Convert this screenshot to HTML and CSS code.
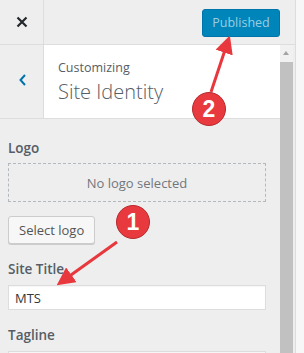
FILE: index.html
```html
<!DOCTYPE html>
<html>
<head>
  <title>Site Identity</title>
  <link rel="stylesheet" href="styles.css">
</head>
<body>

<div class="sidebar">
  <div class="topbar">
    <button class="close-btn" title="Close">
      <svg width="12" height="12" viewBox="0 0 12 12"><path d="M1.5 1.5 L10.5 10.5 M10.5 1.5 L1.5 10.5" stroke="#23282d" stroke-width="2.2"/></svg>
    </button>
    <div class="spacer"></div>
    <button class="publish-btn" disabled>Published</button>
  </div>

  <div class="panel">
    <div class="content">
      <div class="section-head">
        <button class="back-btn" title="Back">
          <svg width="10" height="14" viewBox="0 0 10 14"><path d="M7 2 L2.5 7 L7 12" fill="none" stroke="#0073aa" stroke-width="2"/></svg>
        </button>
        <div class="section-title">
          <span class="small">Customizing</span>
          <span class="big">Site Identity</span>
        </div>
      </div>

      <div class="controls">
        <label class="ctl-label">Logo</label>
        <div class="placeholder">No logo selected</div>
        <button class="select-btn">Select logo</button>

        <label class="ctl-label">Site Title</label>
        <input class="text-input" type="text" value="MTS">

        <label class="ctl-label">Tagline</label>
        <input class="text-input" type="text" value="">
      </div>
    </div>

    <div class="scrollbar">
      <div class="scroll-up"></div>
      <div class="thumb"></div>
    </div>
  </div>
</div>

<!-- annotations -->
<svg class="notes" width="304" height="353" viewBox="0 0 304 353">
  <defs>
    <marker id="head" markerWidth="6" markerHeight="6" refX="3" refY="3" orient="auto" markerUnits="strokeWidth">
      <path d="M0 0 L6 3 L0 6 Z" fill="#e8383d"/>
    </marker>
  </defs>
  <line x1="211" y1="92" x2="227" y2="44" stroke="#e8383d" stroke-width="3" marker-end="url(#head)"/>
  <line x1="117" y1="242" x2="64" y2="280" stroke="#e8383d" stroke-width="3" marker-end="url(#head)"/>
  <circle cx="209" cy="109" r="16.5" fill="#e83a3e" stroke="#b52a2e" stroke-width="1"/>
  <text x="209" y="117" class="num">2</text>
  <circle cx="133" cy="222" r="16.5" fill="#e83a3e" stroke="#b52a2e" stroke-width="1"/>
  <text x="133" y="230" class="num">1</text>
</svg>

</body>
</html>
```

FILE: styles.css
```css
body {
  margin: 0;
  font-family: 'Open Sans', sans-serif;
  background-color: #f7f7f7;
  height: 353px;
  overflow: hidden;
  position: relative;
}

.sidebar {
  width: 295px;
  height: 353px;
  background-color: #eee;
  border-right: 1px solid #ddd;
  display: flex;
  flex-direction: column;
}

.topbar {
  height: 44px;
  border-bottom: 1px solid #ddd;
  display: flex;
  align-items: center;
}

.close-btn {
  width: 44px;
  height: 44px;
  border: none;
  border-right: 1px solid #ddd;
  background: transparent;
  padding: 0;
  display: flex;
  align-items: center;
  justify-content: center;
}

.spacer {
  flex: 1;
}

.publish-btn {
  width: 78px;
  height: 28px;
  margin-right: 15px;
  margin-top: 1px;
  background-color: #0085ba;
  border: 1px solid #0073aa;
  border-radius: 3px;
  color: #99cee3;
  font-family: 'Open Sans', sans-serif;
  font-size: 12.5px;
  padding: 0;
}

.panel {
  flex: 1;
  display: flex;
  min-height: 0;
}

.content {
  flex: 1;
  overflow: hidden;
}

.section-head {
  display: flex;
  height: 73px;
  border-bottom: 1px solid #ddd;
}

.back-btn {
  width: 44px;
  border: none;
  border-right: 1px solid #ddd;
  background: #eee;
  padding: 0 0 0 2px;
}

.section-title {
  flex: 1;
  background: white;
  padding: 14px 0 0 14px;
  display: flex;
  flex-direction: column;
  color: #555d66;
}

.section-title .small {
  font-size: 12.5px;
  line-height: 18px;
}

.section-title .big {
  font-size: 20px;
  font-weight: 300;
  line-height: 28px;
  margin-top: 1px;
}

.controls {
  padding: 19px 14px 0 8px;
  display: flex;
  flex-direction: column;
  align-items: flex-start;
}

.ctl-label {
  font-size: 13.5px;
  font-weight: 600;
  color: #555d66;
  line-height: 20px;
}

.placeholder {
  align-self: stretch;
  margin-top: 5px;
  height: 37px;
  border: 1px dashed #b4b9be;
  display: flex;
  align-items: center;
  justify-content: center;
  font-size: 13px;
  color: #72777c;
}

.select-btn {
  margin-top: 14px;
  margin-bottom: 15px;
  height: 28px;
  padding: 0 10px;
  background: #f7f7f7;
  border: 1px solid #ccc;
  border-radius: 3px;
  box-shadow: 0 1px 0 #ccc;
  font-family: 'Open Sans', sans-serif;
  font-size: 13px;
  color: #555;
}

.text-input {
  align-self: stretch;
  margin-top: 6px;
  margin-bottom: 15px;
  height: 25px;
  box-sizing: border-box;
  border: 1px solid #ddd;
  box-shadow: inset 0 1px 1px rgba(0,0,0,0.04);
  padding: 0 6px;
  font-family: 'Open Sans', sans-serif;
  font-size: 13px;
  color: #32373c;
}

.scrollbar {
  width: 13px;
  margin-right: 2px;
  background: #f1f1f1;
  display: flex;
  flex-direction: column;
}

.scroll-up {
  height: 17px;
  position: relative;
}

.scroll-up::after {
  content: "";
  position: absolute;
  left: 3px;
  top: 6px;
  border-left: 3.5px solid transparent;
  border-right: 3.5px solid transparent;
  border-bottom: 4px solid #a3a3a3;
}

.thumb {
  flex: 1;
  background: #c1c1c1;
}

.notes {
  position: absolute;
  left: 0;
  top: 0;
  pointer-events: none;
}

.num {
  fill: white;
  font-family: 'Liberation Sans', sans-serif;
  font-weight: bold;
  font-size: 23px;
  text-anchor: middle;
}
```
